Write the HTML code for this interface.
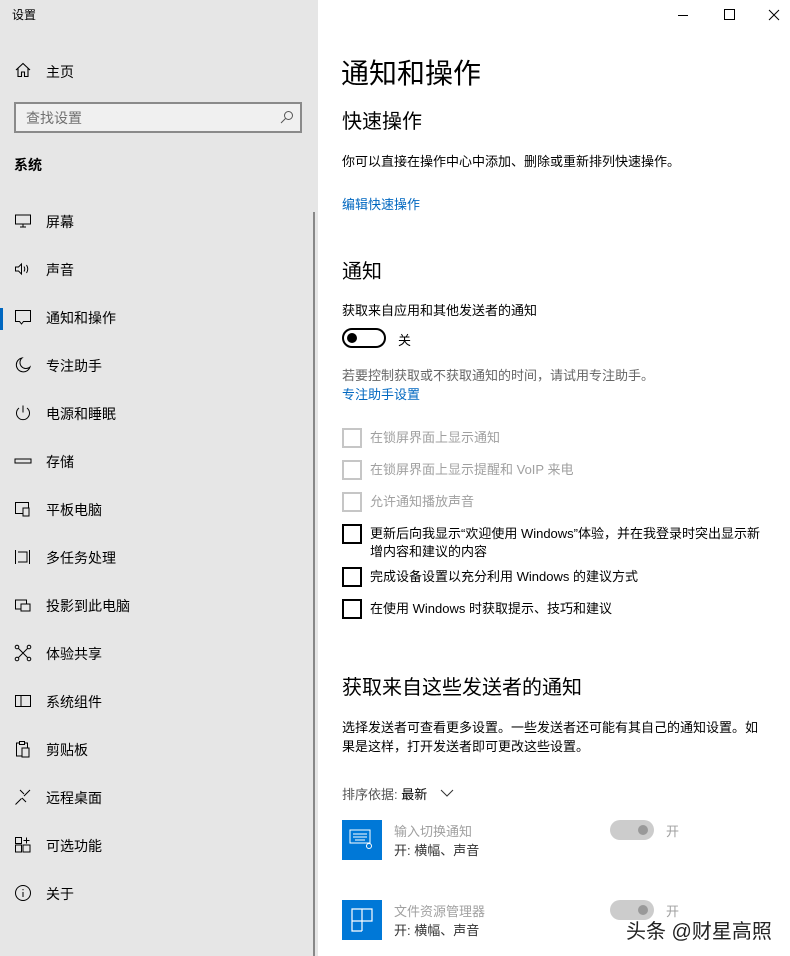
<!DOCTYPE html>
<html><head><meta charset="utf-8"><style>
*{margin:0;padding:0;box-sizing:border-box}
body{width:790px;height:956px;overflow:hidden;font-family:"Liberation Sans","Noto Sans CJK SC",sans-serif;color:#000;background:#fff;position:relative}
.side{position:absolute;left:0;top:0;width:318px;height:956px;background:#e6e6e6}
.a{position:absolute;white-space:nowrap}
.nav{position:absolute;left:0;width:318px;height:48px;font-size:14px}
.nav .ic{position:absolute;left:14px;top:14px;width:18px;height:18px}
.nav .t{position:absolute;left:46px;top:0;line-height:48px}
.cb{position:absolute;left:342px;width:20px;height:20px;border:2px solid #000}
.cb.d{border-color:#c6c6c6}
.lbl{position:absolute;left:370px;font-size:14px;line-height:18px}
.g{color:#a0a0a0}
.blue{color:#0067c0}
</style></head><body>
<div class="side">
<div class="a" style="left:12px;top:6px;font-size:12px">设置</div>
<svg class="a" style="left:15px;top:62px" width="16" height="16" viewBox="0 0 16 16" fill="none" stroke="#000" stroke-width="1.1"><path d="M1 8L8 1.5 15 8M3 6.5V14.5H6.5V10H9.5V14.5H13V6.5"/></svg>
<div class="a" style="left:46px;top:62px;font-size:14px">主页</div>
<div class="a" style="left:14px;top:102px;width:288px;height:31px;border:2px solid #8a8a8a;background:#f0f0f0"></div>
<div class="a" style="left:26px;top:108px;font-size:14px;color:#707070">查找设置</div>
<svg class="a" style="left:280px;top:110px" width="14" height="14" viewBox="0 0 14 14" fill="none" stroke="#555"><circle cx="8.5" cy="5.5" r="4"/><path d="M5.5 8.5L1 13"/></svg>
<div class="a" style="left:14px;top:155px;font-size:14px;font-weight:bold">系统</div>
<div class="a" style="left:313px;top:212px;width:2px;height:744px;background:#888"></div>
<div class="a" style="left:0;top:308px;width:3px;height:22px;background:#0067c0"></div>

<div class="nav" style="top:198px"><svg class="ic" viewBox="0 0 18 18" fill="none" stroke="#000"><rect x="1.5" y="3" width="15" height="9"/><path d="M9 12v3M6 15h6"/></svg><span class="t">屏幕</span></div>
<div class="nav" style="top:246px"><svg class="ic" viewBox="0 0 18 18" fill="none" stroke="#000"><path d="M1.5 7h3l3-3v10l-3-3h-3z M10 6.5q1.5 2.5 0 5M12.5 5q2.5 4 0 8"/></svg><span class="t">声音</span></div>
<div class="nav" style="top:294px"><svg class="ic" viewBox="0 0 18 18" fill="none" stroke="#000"><path d="M1.5 2.5h15v11h-7l-2 2.5-2-2.5h-4z"/></svg><span class="t">通知和操作</span></div>
<div class="nav" style="top:342px"><svg class="ic" viewBox="0 0 18 18" fill="none" stroke="#000"><path d="M8 2a7 7 0 1 0 8 9A6 6 0 0 1 8 2z"/></svg><span class="t">专注助手</span></div>
<div class="nav" style="top:390px"><svg class="ic" viewBox="0 0 18 18" fill="none" stroke="#000"><path d="M9 1.5v7M5 4a6.5 6.5 0 1 0 8 0"/></svg><span class="t">电源和睡眠</span></div>
<div class="nav" style="top:438px"><svg class="ic" viewBox="0 0 18 18" fill="none" stroke="#000"><rect x="1" y="7" width="16" height="4"/></svg><span class="t">存储</span></div>
<div class="nav" style="top:486px"><svg class="ic" viewBox="0 0 18 18" fill="none" stroke="#000"><rect x="1.5" y="2.5" width="13" height="11"/><rect x="9" y="8" width="6" height="8" fill="#e6e6e6"/></svg><span class="t">平板电脑</span></div>
<div class="nav" style="top:534px"><svg class="ic" viewBox="0 0 18 18" fill="none" stroke="#000"><path d="M1.5 2v14M4 4h9v10H4M15.5 2v14"/></svg><span class="t">多任务处理</span></div>
<div class="nav" style="top:582px"><svg class="ic" viewBox="0 0 18 18" fill="none" stroke="#000"><rect x="1.5" y="4" width="11" height="9"/><rect x="7" y="8" width="9" height="7" fill="#e6e6e6"/></svg><span class="t">投影到此电脑</span></div>
<div class="nav" style="top:630px"><svg class="ic" viewBox="0 0 18 18" fill="none" stroke="#000"><circle cx="3" cy="3" r="1.8"/><circle cx="15" cy="3" r="1.8"/><circle cx="3" cy="15" r="1.8"/><circle cx="15" cy="15" r="1.8"/><path d="M4.5 4.5l9 9M13.5 4.5l-9 9"/></svg><span class="t">体验共享</span></div>
<div class="nav" style="top:678px"><svg class="ic" viewBox="0 0 18 18" fill="none" stroke="#000"><rect x="1.5" y="3.5" width="15" height="11"/><path d="M7 3.5v11"/></svg><span class="t">系统组件</span></div>
<div class="nav" style="top:726px"><svg class="ic" viewBox="0 0 18 18" fill="none" stroke="#000"><rect x="2.5" y="3" width="11" height="13"/><rect x="5.5" y="1.5" width="5" height="3" fill="#e6e6e6"/><rect x="8" y="8" width="7" height="9" fill="#e6e6e6"/></svg><span class="t">剪贴板</span></div>
<div class="nav" style="top:774px"><svg class="ic" viewBox="0 0 18 18" fill="none" stroke="#000"><path d="M1.5 16.5l6-6M10 8l6-6M6 2l4 4M8 10l4 4"/></svg><span class="t">远程桌面</span></div>
<div class="nav" style="top:822px"><svg class="ic" viewBox="0 0 18 18" fill="none" stroke="#000"><rect x="1.5" y="1.5" width="6" height="6"/><rect x="1.5" y="9" width="6" height="7"/><rect x="9" y="9" width="7" height="7"/><path d="M12.5 1.5v6M9.5 4.5h6"/></svg><span class="t">可选功能</span></div>
<div class="nav" style="top:870px"><svg class="ic" viewBox="0 0 18 18" fill="none" stroke="#000"><circle cx="9" cy="9" r="7.5"/><path d="M9 8v5M9 5v1.2"/></svg><span class="t">关于</span></div>
</div>

<svg class="a" style="left:676px;top:8px" width="110" height="14" viewBox="0 0 110 14" fill="none" stroke="#000"><path d="M2 7.5h10M48.5 1.5h10v10h-10zM93 2l10 10M103 2l-10 10"/></svg>

<div class="a" style="left:341px;top:52px;font-size:28px">通知和操作</div>
<div class="a" style="left:342px;top:105px;font-size:20px">快速操作</div>
<div class="a" style="left:342px;top:151px;font-size:13px">你可以直接在操作中心中添加、删除或重新排列快速操作。</div>
<div class="a blue" style="left:342px;top:194px;font-size:13px">编辑快速操作</div>
<div class="a" style="left:342px;top:255px;font-size:20px">通知</div>
<div class="a" style="left:342px;top:300px;font-size:13px">获取来自应用和其他发送者的通知</div>
<div class="a" style="left:342px;top:328px;width:44px;height:20px;border:2px solid #000;border-radius:10px"></div>
<div class="a" style="left:347px;top:333px;width:10px;height:10px;border-radius:50%;background:#000"></div>
<div class="a" style="left:398px;top:330px;font-size:13px">关</div>
<div class="a" style="left:342px;top:365px;font-size:13px;color:#666">若要控制获取或不获取通知的时间，请试用专注助手。</div>
<div class="a blue" style="left:342px;top:384px;font-size:13px">专注助手设置</div>

<div class="cb d" style="top:428px"></div><div class="lbl g" style="top:429px;font-size:13px">在锁屏界面上显示通知</div>
<div class="cb d" style="top:460px"></div><div class="lbl g" style="top:461px;font-size:13px">在锁屏界面上显示提醒和 VoIP 来电</div>
<div class="cb d" style="top:492px"></div><div class="lbl g" style="top:493px;font-size:13px">允许通知播放声音</div>
<div class="cb" style="top:524px"></div><div class="lbl" style="top:525px;font-size:13px;white-space:normal;width:392px">更新后向我显示“欢迎使用 Windows”体验，并在我登录时突出显示新增内容和建议的内容</div>
<div class="cb" style="top:567px"></div><div class="lbl" style="top:568px;font-size:13px">完成设备设置以充分利用 Windows 的建议方式</div>
<div class="cb" style="top:599px"></div><div class="lbl" style="top:600px;font-size:13px">在使用 Windows 时获取提示、技巧和建议</div>

<div class="a" style="left:342px;top:671px;font-size:20px">获取来自这些发送者的通知</div>
<div class="a" style="left:342px;top:718px;font-size:13px;line-height:19px;white-space:normal;width:428px">选择发送者可查看更多设置。一些发送者还可能有其自己的通知设置。如果是这样，打开发送者即可更改这些设置。</div>
<div class="a" style="left:342px;top:784px;font-size:13px;color:#555">排序依据: <span style="color:#000">最新</span></div>
<svg class="a" style="left:440px;top:789px" width="14" height="8" viewBox="0 0 14 8" fill="none" stroke="#333"><path d="M1 1l6 6 6-6"/></svg>

<div class="a" style="left:342px;top:820px;width:40px;height:40px;background:#0078d7"></div>
<svg class="a" style="left:349px;top:828px" width="26" height="24" viewBox="0 0 26 24" fill="none" stroke="#fff"><rect x="1" y="2" width="20" height="13"/><path d="M4 6h14M4 9h14M6 12h10"/><circle cx="20" cy="18" r="2.5"/></svg>
<div class="a g" style="left:394px;top:821px;font-size:13px">输入切换通知</div>
<div class="a" style="left:394px;top:840px;font-size:13px;color:#333">开: 横幅、声音</div>
<div class="a" style="left:610px;top:820px;width:44px;height:20px;border-radius:10px;background:#ccc"></div>
<div class="a" style="left:638px;top:825px;width:10px;height:10px;border-radius:50%;background:#999"></div>
<div class="a g" style="left:666px;top:821px;font-size:13px">开</div>

<div class="a" style="left:342px;top:900px;width:40px;height:40px;background:#0078d7"></div>
<svg class="a" style="left:351px;top:908px" width="22" height="24" viewBox="0 0 22 24" fill="none" stroke="#fff" stroke-width="1.2"><path d="M1 1h20v12H1zM11 1v22M1 13v10h10"/></svg>
<div class="a g" style="left:394px;top:901px;font-size:13px">文件资源管理器</div>
<div class="a" style="left:394px;top:920px;font-size:13px;color:#333">开: 横幅、声音</div>
<div class="a" style="left:610px;top:900px;width:44px;height:20px;border-radius:10px;background:#ccc"></div>
<div class="a" style="left:638px;top:905px;width:10px;height:10px;border-radius:50%;background:#999"></div>
<div class="a g" style="left:666px;top:901px;font-size:13px">开</div>
<div class="a" style="left:626px;top:915px;font-size:20px;color:#222;text-shadow:0 0 2px #fff">头条 @财星高照</div>
</body></html>
